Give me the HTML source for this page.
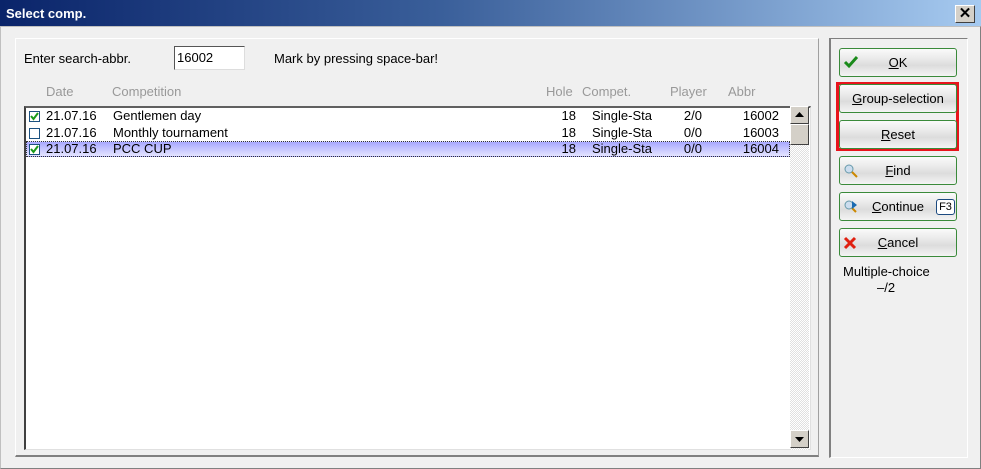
<!DOCTYPE html>
<html><head><style>
*{margin:0;padding:0;box-sizing:border-box}
body{width:981px;height:469px;background:#f0f0f0;font-family:"Liberation Sans",sans-serif;font-size:13px;color:#000;position:relative;overflow:hidden}
.a{position:absolute}
.title{left:0;top:0;width:981px;height:26px;background:linear-gradient(90deg,#0a246a 0%,#3a5f9a 45%,#a6caf0 100%);color:#fff;font-weight:bold;font-size:13px;padding:6px 0 0 6px}
.win{left:0;top:26px;width:981px;height:443px;border:1px solid #c0c0c0;border-right-color:#808080;border-bottom-color:#808080}
.close{left:955px;top:5px;width:20px;height:18px;background:#d4d0c8;border:1px solid;border-color:#fff #404040 #404040 #fff;font-weight:bold;font-size:15px;text-align:center;line-height:15px}
.panelL{left:15px;top:38px;width:804px;height:419px;border-left:1px solid #fff;border-top:1px solid #fff;border-right:1px solid #a0a0a0;border-bottom:2px solid #808080}
.panelR{left:829px;top:38px;width:139px;height:420px;border-left:2px solid #808080;border-top:1px solid #808080;border-right:1px solid #fff;border-bottom:1px solid #fff}
.hdr{color:#999;top:84px}
.list{left:24px;top:106px;width:787px;height:344px;background:#fff;border:1px solid;border-color:#606060 #e0e0e0 #e0e0e0 #404040;border-left-width:2px;border-top-width:2px}
.row{position:absolute;left:0;width:764px;height:16px;line-height:16px}
.row span{position:absolute}
.r{text-align:right}
.cb{position:absolute;left:3px;top:3px;width:11px;height:11px;border:1px solid #1c5180;background:#fff}
.cb svg{display:block}
.sel{background:linear-gradient(#a8a8ff,#e4e4ff);border:1px dotted #333}
.sb{left:790px;top:106px;width:19px;height:344px;background:repeating-conic-gradient(#e0e0e0 0 25%,#fff 0 50%) 0 0/2px 2px}
.sbb{position:absolute;left:0;width:19px;height:18px;background:#d4d0c8;border:1px solid;border-color:#fff #404040 #404040 #fff}
.btn{position:absolute;left:839px;width:118px;height:29px;border:1px solid #3a8a3a;border-radius:3px;background:linear-gradient(#fafafa,#e8e8e8 40%,#dcdcdc 60%,#f4f4f4);text-align:center;line-height:27px;font-size:13px}
u{text-decoration:underline}
</style></head><body>
<div class="a title">Select comp.</div>
<div class="a close">✕</div>
<div class="a win"></div>
<div class="a panelL"></div>
<div class="a panelR"></div>
<div class="a" style="left:24px;top:51px">Enter search-abbr.</div>
<div class="a" style="left:174px;top:46px;width:71px;height:24px;background:#fff;border:1px solid;border-color:#555 #ddd #ddd #555;padding:3px 2px">16002</div>
<div class="a" style="left:274px;top:51px">Mark by pressing space-bar!</div>
<div class="a hdr" style="left:46px">Date</div>
<div class="a hdr" style="left:112px">Competition</div>
<div class="a hdr" style="left:546px">Hole</div>
<div class="a hdr" style="left:582px">Compet.</div>
<div class="a hdr" style="left:670px">Player</div>
<div class="a hdr" style="left:728px">Abbr</div>
<div class="a list">
 <div class="row" style="top:0"><div class="cb"><svg width="9" height="9" viewBox="0 0 9 9"><path d="M1 4l2.5 3L8 1" stroke="#1a9a1a" stroke-width="2" fill="none"/></svg></div><span style="left:20px">21.07.16</span><span style="left:87px">Gentlemen day</span><span class="r" style="left:500px;width:50px">18</span><span style="left:566px">Single-Sta</span><span class="r" style="left:630px;width:46px">2/0</span><span class="r" style="left:700px;width:53px">16002</span></div>
 <div class="row" style="top:17px"><div class="cb"></div><span style="left:20px">21.07.16</span><span style="left:87px">Monthly tournament</span><span class="r" style="left:500px;width:50px">18</span><span style="left:566px">Single-Sta</span><span class="r" style="left:630px;width:46px">0/0</span><span class="r" style="left:700px;width:53px">16003</span></div>
 <div class="row sel" style="top:33px"><div class="cb" style="top:2px;left:2px"><svg width="9" height="9" viewBox="0 0 9 9"><path d="M1 4l2.5 3L8 1" stroke="#1a9a1a" stroke-width="2" fill="none"/></svg></div><span style="left:19px;top:-1px">21.07.16</span><span style="left:86px;top:-1px">PCC CUP</span><span class="r" style="left:499px;width:50px;top:-1px">18</span><span style="left:565px;top:-1px">Single-Sta</span><span class="r" style="left:629px;width:46px;top:-1px">0/0</span><span class="r" style="left:699px;width:53px;top:-1px">16004</span></div>
</div>
<div class="a sb">
 <div class="sbb" style="top:0"><svg width="17" height="16"><path d="M4 10h9l-4.5-5z" fill="#000"/></svg></div>
 <div class="sbb" style="top:18px;height:21px"></div>
 <div class="sbb" style="top:324px"><svg width="17" height="16"><path d="M4 6h9l-4.5 5z" fill="#000"/></svg></div>
</div>
<div class="btn" style="top:48px"><svg class="a" style="left:3px;top:6px" width="16" height="14"><path d="M2 7l4 4 8-9" stroke="#1a8a1a" stroke-width="3" fill="none"/></svg><u>O</u>K</div>
<div class="a" style="left:836px;top:82px;width:123px;height:69px;border:3px solid #e8141c"></div>
<div class="btn" style="top:84px"><u>G</u>roup-selection</div>
<div class="btn" style="top:120px"><u>R</u>eset</div>
<div class="btn" style="top:156px"><svg class="a" style="left:3px;top:6px" width="16" height="16"><circle cx="6" cy="6" r="4" fill="#cde" stroke="#69a" /><path d="M9 9l5 5" stroke="#c80" stroke-width="2"/></svg><u>F</u>ind</div>
<div class="btn" style="top:192px"><svg class="a" style="left:3px;top:6px" width="16" height="16"><circle cx="6" cy="6" r="4" fill="#cde" stroke="#69a"/><path d="M9 9l4 4" stroke="#c80" stroke-width="2"/><path d="M9 2l5 4-5 4z" fill="#1a6ab0"/></svg><u>C</u>ontinue<span class="a" style="left:96px;top:6px;width:19px;height:16px;border:1px solid #1c4a80;border-radius:3px;line-height:14px;font-size:11px;background:#fff">F3</span></div>
<div class="btn" style="top:228px"><svg class="a" style="left:3px;top:7px" width="14" height="14"><path d="M2 2l10 10M12 2L2 12" stroke="#e02010" stroke-width="3"/></svg><u>C</u>ancel</div>
<div class="a" style="left:843px;top:264px">Multiple-choice</div>
<div class="a" style="left:877px;top:280px">–/2</div>
</body></html>
